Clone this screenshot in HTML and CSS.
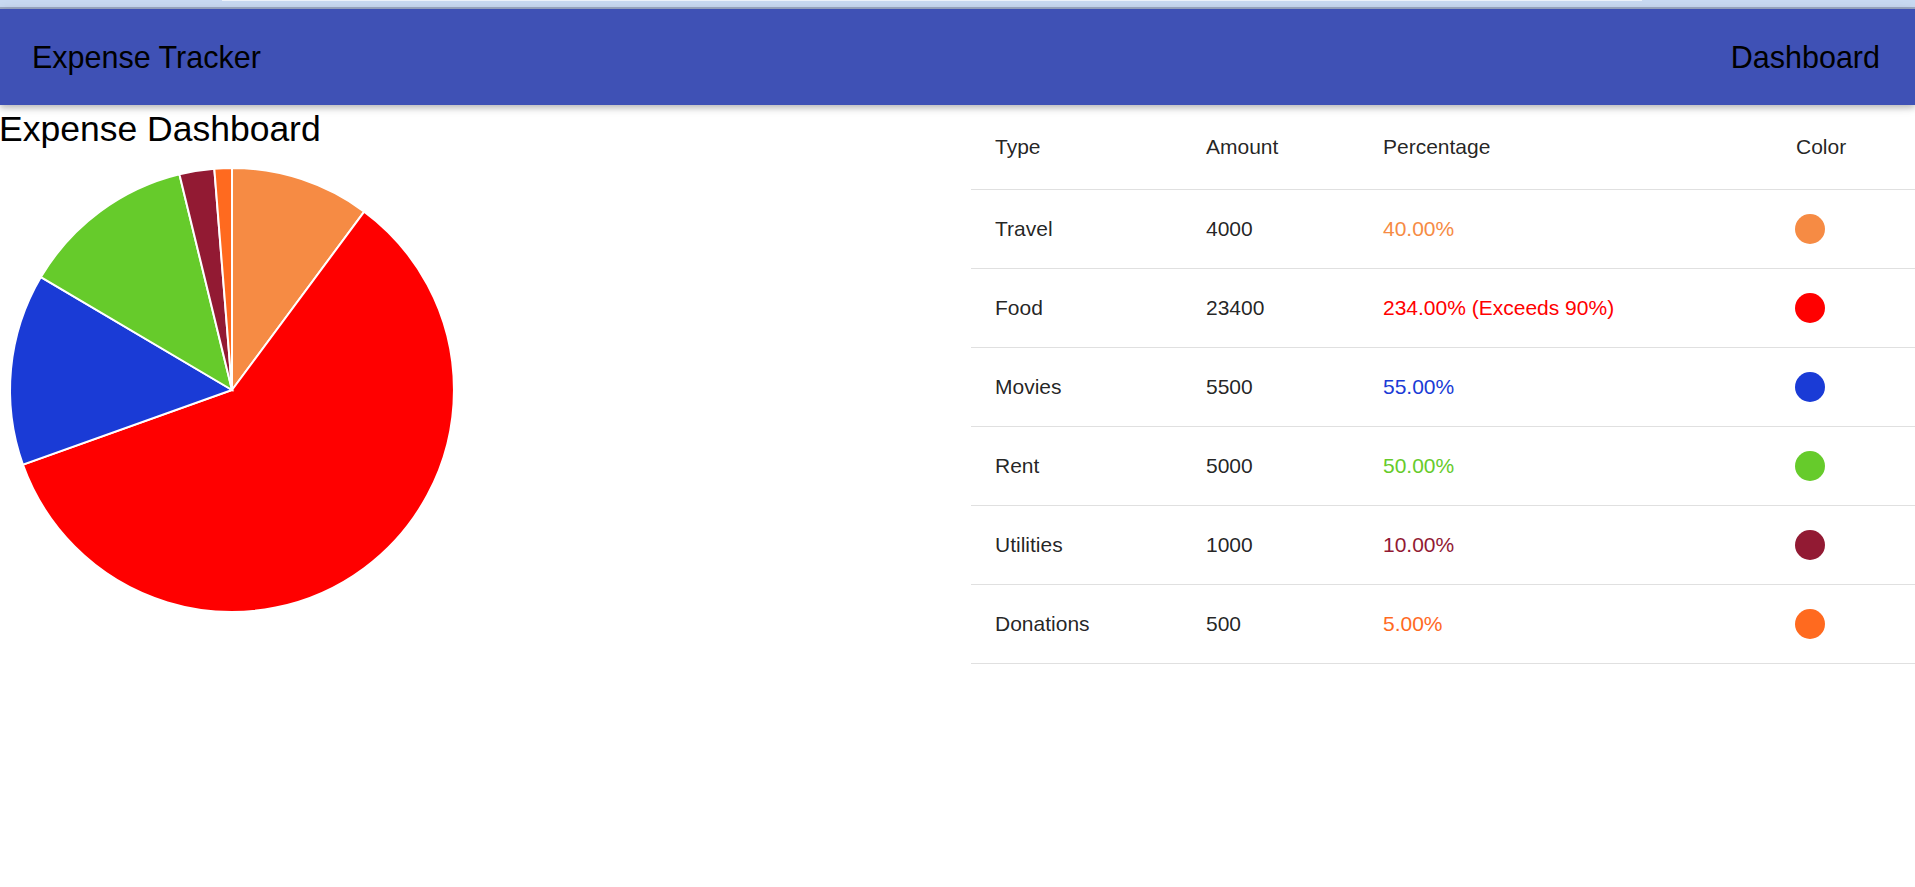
FILE: index.html
```html
<!DOCTYPE html>
<html lang="en">
<head>
<meta charset="utf-8">
<title>Expense Tracker</title>
<link rel="stylesheet" href="styles.css">
</head>
<body>
<div class="topstrip"><div class="tab"></div></div>
<header class="toolbar">
  <span class="brand">Expense Tracker</span>
  <span class="nav">Dashboard</span>
</header>
<main class="layout">
  <section class="chart-panel">
    <h2 class="title">Expense Dashboard</h2>
    <svg class="pie" width="446" height="446" viewBox="0 0 446 446">
      <g stroke="#ffffff" stroke-width="2" stroke-linejoin="miter">
        <path fill="#f68b44" d="M223,223 L223,1 A222,222 0 0 1 355.2,44.6 Z"/>
        <path fill="#ff0000" d="M223,223 L355.2,44.6 A222,222 0 1 1 13.9,297.6 Z"/>
        <path fill="#1a3bd6" d="M223,223 L13.9,297.6 A222,222 0 0 1 31.9,110.1 Z"/>
        <path fill="#66cb2b" d="M223,223 L31.9,110.1 A222,222 0 0 1 170.4,7.3 Z"/>
        <path fill="#921a33" d="M223,223 L170.4,7.3 A222,222 0 0 1 205.3,1.7 Z"/>
        <path fill="#ff6a1f" d="M223,223 L205.3,1.7 A222,222 0 0 1 223,1 Z"/>
      </g>
    </svg>
  </section>
  <section class="table-panel">
    <table class="expenses">
      <colgroup>
        <col class="c-type"><col class="c-amount"><col class="c-pct"><col class="c-color">
      </colgroup>
      <thead>
        <tr><th>Type</th><th>Amount</th><th>Percentage</th><th>Color</th></tr>
      </thead>
      <tbody>
        <tr><td>Travel</td><td>4000</td><td class="pct travel">40.00%</td><td><span class="dot travel-bg"></span></td></tr>
        <tr><td>Food</td><td>23400</td><td class="pct food">234.00% (Exceeds 90%)</td><td><span class="dot food-bg"></span></td></tr>
        <tr><td>Movies</td><td>5500</td><td class="pct movies">55.00%</td><td><span class="dot movies-bg"></span></td></tr>
        <tr><td>Rent</td><td>5000</td><td class="pct rent">50.00%</td><td><span class="dot rent-bg"></span></td></tr>
        <tr><td>Utilities</td><td>1000</td><td class="pct utilities">10.00%</td><td><span class="dot utilities-bg"></span></td></tr>
        <tr><td>Donations</td><td>500</td><td class="pct donations">5.00%</td><td><span class="dot donations-bg"></span></td></tr>
      </tbody>
    </table>
  </section>
</main>
</body>
</html>
```
FILE: styles.css
```css
html, body {
  margin: 0;
  padding: 0;
  background: #ffffff;
}

body {
  font-family: "Liberation Sans", Arial, sans-serif;
  overflow: hidden;
}

.topstrip {
  height: 7px;
  background: #c9daf2;
  border-bottom: 2px solid #9eabc6;
}

.topstrip .tab {
  margin-left: 222px;
  width: 1420px;
  height: 1px;
  background: #eef3fb;
}

.toolbar {
  position: relative;
  z-index: 2;
  height: 96px;
  box-sizing: border-box;
  padding: 0 35px 0 32px;
  background: #3f51b5;
  display: flex;
  align-items: center;
  justify-content: space-between;
  font-size: 30.5px;
  color: #000000;
  box-shadow: 0 3px 6px rgba(0, 0, 0, 0.22), 0 1px 12px rgba(0, 0, 0, 0.1);
}

.layout {
  display: grid;
  grid-template-columns: 971px 1fr;
}

.chart-panel {
  display: flex;
  flex-direction: column;
  align-items: flex-start;
}

.title {
  margin: 4px 0 17px -1px;
  font-size: 35.5px;
  line-height: 41px;
  font-weight: normal;
  color: #000000;
}

.pie {
  display: block;
  margin-left: 9px;
  overflow: visible;
}

.expenses {
  width: 944px;
  table-layout: fixed;
  border-collapse: separate;
  border-spacing: 0;
  font-family: "Liberation Sans", Arial, sans-serif;
  font-size: 21px;
  color: rgba(0, 0, 0, 0.87);
}

.c-type { width: 211px; }
.c-amount { width: 177px; }
.c-pct { width: 413px; }
.c-color { width: 143px; }

.expenses th,
.expenses td {
  box-sizing: border-box;
  padding: 0 0 0 24px;
  text-align: left;
  vertical-align: middle;
  border-bottom: 1px solid #e0e0e0;
  white-space: nowrap;
}

.expenses th {
  height: 85px;
  font-weight: normal;
}

.expenses td {
  height: 79px;
}

.dot {
  display: block;
  width: 30px;
  height: 30px;
  border-radius: 50%;
  margin-left: -1px;
}

.travel { color: #f68b44; }
.food { color: #ff0000; }
.movies { color: #1a3bd6; }
.rent { color: #66cb2b; }
.utilities { color: #921a33; }
.donations { color: #ff6a1f; }

.travel-bg { background: #f68b44; }
.food-bg { background: #ff0000; }
.movies-bg { background: #1a3bd6; }
.rent-bg { background: #66cb2b; }
.utilities-bg { background: #921a33; }
.donations-bg { background: #ff6a1f; }
```
